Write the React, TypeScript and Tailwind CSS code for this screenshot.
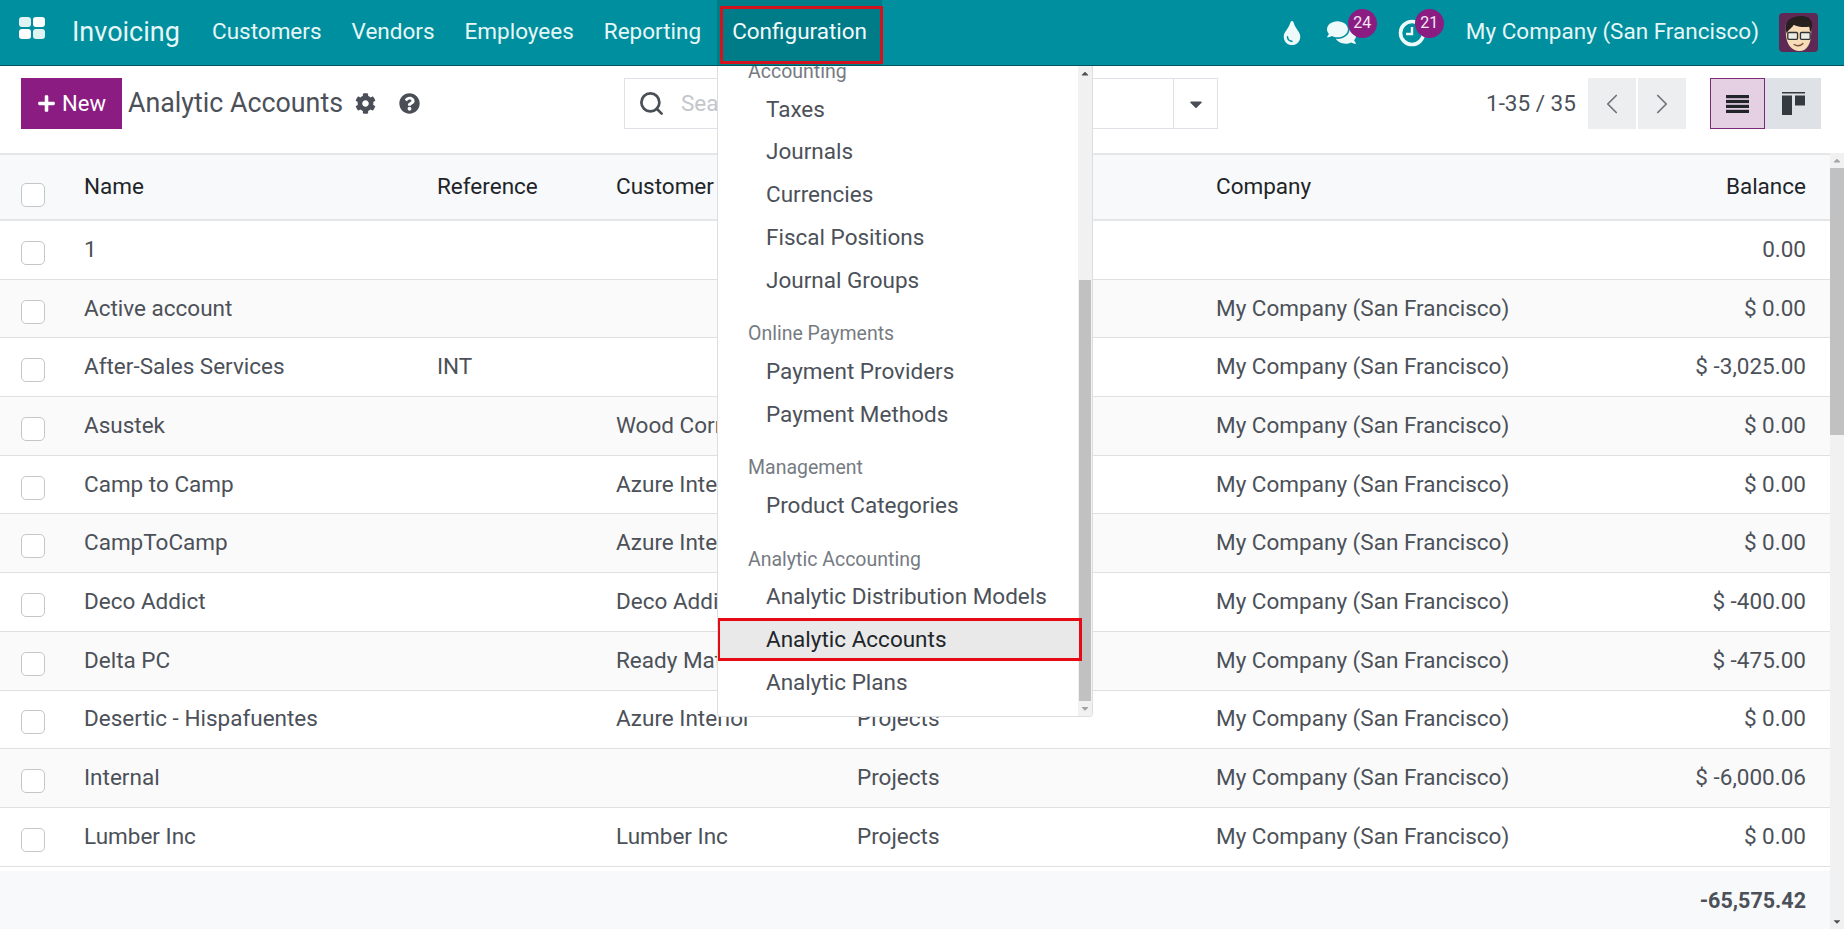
import { ChevronLeft, ChevronRight, Search } from "lucide-react";
import { FaCaretDown, FaCaretUp, FaCog, FaComments, FaPlus, FaQuestionCircle, FaTint } from "react-icons/fa";

const navItems = ["Customers", "Vendors", "Employees", "Reporting"];

const company = "My Company (San Francisco)";

const rows = [
  { name: "1", ref: "", customer: "", plan: "", company: "", balance: "0.00" },
  { name: "Active account", ref: "", customer: "", plan: "Projects", company, balance: "$ 0.00" },
  { name: "After-Sales Services", ref: "INT", customer: "", plan: "Projects", company, balance: "$ -3,025.00" },
  { name: "Asustek", ref: "", customer: "Wood Corner", plan: "Projects", company, balance: "$ 0.00" },
  { name: "Camp to Camp", ref: "", customer: "Azure Interior", plan: "Projects", company, balance: "$ 0.00" },
  { name: "CampToCamp", ref: "", customer: "Azure Interior", plan: "Projects", company, balance: "$ 0.00" },
  { name: "Deco Addict", ref: "", customer: "Deco Addict", plan: "Projects", company, balance: "$ -400.00" },
  { name: "Delta PC", ref: "", customer: "Ready Mat", plan: "Projects", company, balance: "$ -475.00" },
  { name: "Desertic - Hispafuentes", ref: "", customer: "Azure Interior", plan: "Projects", company, balance: "$ 0.00" },
  { name: "Internal", ref: "", customer: "", plan: "Projects", company, balance: "$ -6,000.06" },
  { name: "Lumber Inc", ref: "", customer: "Lumber Inc", plan: "Projects", company, balance: "$ 0.00" },
];

const menu = [
  { title: "Accounting", items: ["Taxes", "Journals", "Currencies", "Fiscal Positions", "Journal Groups"] },
  { title: "Online Payments", items: ["Payment Providers", "Payment Methods"] },
  { title: "Management", items: ["Product Categories"] },
  { title: "Analytic Accounting", items: ["Analytic Distribution Models", "Analytic Accounts", "Analytic Plans"] },
];

function Checkbox() {
  return <span className="block w-[24px] h-[24px] rounded-[5px] border border-[#c4c7ca] bg-white" />;
}

function Avatar() {
  return (
    <svg viewBox="0 0 40 40" className="w-[39px] h-[39px] rounded-[4px]">
      <rect width="40" height="40" fill="#5e2a55" />
      <path d="M7 20c0 12 6 19 14 19s12-8 12-19V12H7z" fill="#f7dcb8" />
      <path d="M8 21C5 13 8 6 16 4c7-2 15-1 17 4 2 4 1 8-1 12l-1-6c-6 1-12 0-16-2-1 3-5 4-7 9z" fill="#26201f" />
      <rect x="9" y="20" width="10" height="7" rx="1" fill="#ecebe4" stroke="#333" strokeWidth="1.4" />
      <rect x="22" y="20" width="10" height="7" rx="1" fill="#ecebe4" stroke="#333" strokeWidth="1.4" />
      <path d="M15 32c3 2 7 2 10-1" fill="none" stroke="#7a4a35" strokeWidth="1.4" />
    </svg>
  );
}

function ClockIcon() {
  return (
    <svg viewBox="0 0 28 28" className="w-[28px] h-[28px]" fill="none" stroke="#eefafa">
      <circle cx="14" cy="14" r="11.5" strokeWidth="3.6" />
      <path d="M14 8v7H8" strokeWidth="2.4" />
    </svg>
  );
}

function Badge({ value, left }: { value: number; left: string }) {
  return (
    <span className={`absolute top-[9px] ${left} w-[29px] h-[29px] rounded-full bg-[#8b1d82] text-[#f5e6f3] text-[16px] leading-[27px] text-center`}>
      {value}
    </span>
  );
}

function ListIcon() {
  return (
    <svg viewBox="0 0 23 18" className="w-[23px] h-[18px]" fill="#212529">
      <rect width="23" height="3.2" />
      <rect y="4.9" width="23" height="3.2" />
      <rect y="9.8" width="23" height="3.2" />
      <rect y="14.8" width="23" height="3.2" />
    </svg>
  );
}

function KanbanIcon() {
  return (
    <svg viewBox="0 0 23 23" className="w-[23px] h-[23px]" fill="#343a40">
      <rect width="23" height="1.5" />
      <rect y="3.5" width="10" height="19.5" />
      <rect x="13" y="3.5" width="10" height="10" />
    </svg>
  );
}

function Navbar() {
  return (
    <header className="h-[66px] shrink-0 flex items-center bg-[#008f9e] border-b border-[#00565f] text-[#e6f7f7] text-[22.5px]">
      <div className="w-[72px] pl-[19px]">
        <div className="grid grid-cols-2 gap-[2px] w-[26px] h-[22px] -mt-[9px]">
          <span className="rounded-[3px] bg-[#dff3f3]" />
          <span className="rounded-[3px] bg-white" />
          <span className="rounded-[3px] bg-white" />
          <span className="rounded-[3px] bg-[#dff3f3]" />
        </div>
      </div>
      <span className="w-[125px] text-[27px] -mt-[1px]">Invoicing</span>
      {navItems.map((item) => (
        <span key={item} className="px-[15px] -mt-[2px]">{item}</span>
      ))}
      <div className="relative h-[65px] w-[165px] ml-[1px] bg-[#007c89] flex items-center pl-[15px] pb-[2px] text-[#f2fbfb]">
        Configuration
        <span className="absolute top-[6px] left-[3px] w-[163px] h-[58px] border-[3px] border-[#d4121c]" />
      </div>
      <div className="ml-auto flex items-center">
        <FaTint className="text-[24px] text-[#eefafa] mr-[23px]" />
        <div className="relative h-[65px] w-[50px] flex items-center mr-[21px]">
          <FaComments className="text-[29px] text-[#eefafa]" />
          <Badge value={24} left="left-[21px]" />
        </div>
        <div className="relative h-[65px] w-[48px] flex items-center mr-[20px]">
          <ClockIcon />
          <Badge value={21} left="left-[17px]" />
        </div>
        <span className="mr-[20px] -mt-[2px]">My Company (San Francisco)</span>
        <div className="mr-[26px]">
          <Avatar />
        </div>
      </div>
    </header>
  );
}

function ControlPanel() {
  return (
    <div className="h-[87px] shrink-0 flex items-start pt-[12px] pl-[21px] bg-white text-[#4c5159]">
      <div className="w-[603px] flex items-start">
        <button className="w-[101px] h-[51px] flex items-center justify-center gap-[6px] bg-[#8a1c82] text-white text-[22px]">
          <FaPlus className="text-[19px]" />
          New
        </button>
        <span className="ml-[6px] mt-[8px] text-[26.8px] leading-[34px]">Analytic Accounts</span>
        <FaCog className="ml-[12px] mt-[15px] text-[21px] text-[#4a4f57]" />
        <FaQuestionCircle className="ml-[23px] mt-[15px] text-[21px] text-[#4a4f57]" />
      </div>
      <div className="w-[594px] h-[51px] flex items-center border border-[#dee2e6]">
        <Search size={27} strokeWidth={2.4} className="ml-[13px] text-[#4a4f57]" />
        <span className="ml-[16px] flex-1 text-[22.5px] text-[#c3c6ca]">Search...</span>
        <span className="w-[44px] h-full flex items-center justify-center border-l border-[#dee2e6]">
          <FaCaretDown className="text-[20px] text-[#4a4f57]" />
        </span>
      </div>
      <span className="ml-[268px] mt-[10px] w-[102px] text-[22.5px] leading-[30px]">1-35 / 35</span>
      <div className="flex gap-[2px]">
        <span className="w-[48px] h-[51px] flex items-center justify-center bg-[#eceef0]">
          <ChevronLeft size={34} strokeWidth={1.2} className="text-[#6f7378]" />
        </span>
        <span className="w-[48px] h-[51px] flex items-center justify-center bg-[#eceef0]">
          <ChevronRight size={34} strokeWidth={1.2} className="text-[#6f7378]" />
        </span>
      </div>
      <div className="ml-[24px] flex">
        <span className="w-[55px] h-[51px] flex items-center justify-center bg-[#e4cfe3] border border-[#7c2a77]">
          <ListIcon />
        </span>
        <span className="w-[56px] h-[51px] flex items-center justify-center bg-[#dee2e6]">
          <KanbanIcon />
        </span>
      </div>
    </div>
  );
}

const rowCols = "grid grid-cols-[84px_353px_179px_241px_359px_1fr_auto] items-center pr-[24px]";

function Table() {
  return (
    <div className="flex-1 flex min-h-0 bg-white">
      <div className="flex-1 flex flex-col min-w-0 border-t-2 border-[#e4e6e8]">
        <div className={`${rowCols} h-[66px] bg-[#f8f9fa] border-b-2 border-[#e4e6e8] text-[#212529] text-[22.5px]`}>
          <div className="pl-[21px] pt-[16px]"><Checkbox /></div>
          <span className="-mt-[1px]">Name</span>
          <span className="-mt-[1px]">Reference</span>
          <span className="-mt-[1px]">Customer</span>
          <span />
          <span className="-mt-[1px]">Company</span>
          <span className="-mt-[1px] text-right">Balance</span>
        </div>
        {rows.map((r, i) => (
          <div
            key={r.name}
            className={`${rowCols} h-[58.7px] border-b border-[#e0e0e0] text-[#4c5159] text-[22.5px] ${i % 2 === 1 ? "bg-[#fafafa]" : "bg-white"}`}
          >
            <div className="pl-[21px] pt-[6px]"><Checkbox /></div>
            <span>{r.name}</span>
            <span>{r.ref}</span>
            <span>{r.customer}</span>
            <span>{r.plan}</span>
            <span>{r.company}</span>
            <span className="text-right">{r.balance}</span>
          </div>
        ))}
        <div className="mt-[4px] flex-1 bg-[#f8f9fa] flex items-center justify-end pr-[24px] pt-[2px] text-[#4c5159] text-[21.5px] font-bold">
          -65,575.42
        </div>
      </div>
      <div className="w-[14px] shrink-0 flex flex-col bg-[#f1f1f1]">
        <FaCaretUp className="h-[15px] w-[14px] p-[2px] text-[#a3a3a3]" />
        <div className="h-[267px] bg-[#c1c1c1]" />
        <div className="flex-1" />
        <FaCaretDown className="h-[15px] w-[14px] p-[2px] text-[#505050]" />
      </div>
    </div>
  );
}

function ConfigMenu() {
  return (
    <div className="absolute left-[717px] top-[66px] w-[376px] h-[651px] flex overflow-hidden bg-white border border-t-0 border-[#dcdee0] rounded-b-[4px] text-[22.5px] text-[#4c5159]">
      <div className="relative z-10 flex-1 -mt-[9px]">
        {menu.map((section, i) => (
          <div key={section.title} className={i === 0 ? "" : "mt-[17.4px]"}>
            <div className="pl-[30px] h-[29px] leading-[29px] text-[19.5px] text-[#767b82] mb-[2px]">{section.title}</div>
            {section.items.map((item) =>
              item === "Analytic Accounts" ? (
                <div key={item} className="h-[43px] -mr-[4px] -ml-[1px] flex items-center pl-[46px] bg-[#e9e9e9] border-[3px] border-[#e60a14] text-[#212529]">
                  {item}
                </div>
              ) : (
                <div key={item} className="h-[42.8px] flex items-center pl-[48px]">
                  {item}
                </div>
              )
            )}
          </div>
        ))}
      </div>
      <div className="w-[14px] shrink-0 flex flex-col bg-[#f1f1f1]">
        <FaCaretUp className="h-[15px] w-[14px] p-[2px] text-[#505050]" />
        <div className="h-[199px]" />
        <div className="h-[422px] mx-[1px] bg-[#c1c1c1]" />
        <FaCaretDown className="h-[15px] w-[14px] p-[2px] text-[#a3a3a3]" />
      </div>
    </div>
  );
}

export default function App() {
  return (
    <div className="relative w-[1844px] h-[929px] flex flex-col overflow-hidden font-['Roboto',sans-serif]">
      <Navbar />
      <ControlPanel />
      <Table />
      <ConfigMenu />
    </div>
  );
}
